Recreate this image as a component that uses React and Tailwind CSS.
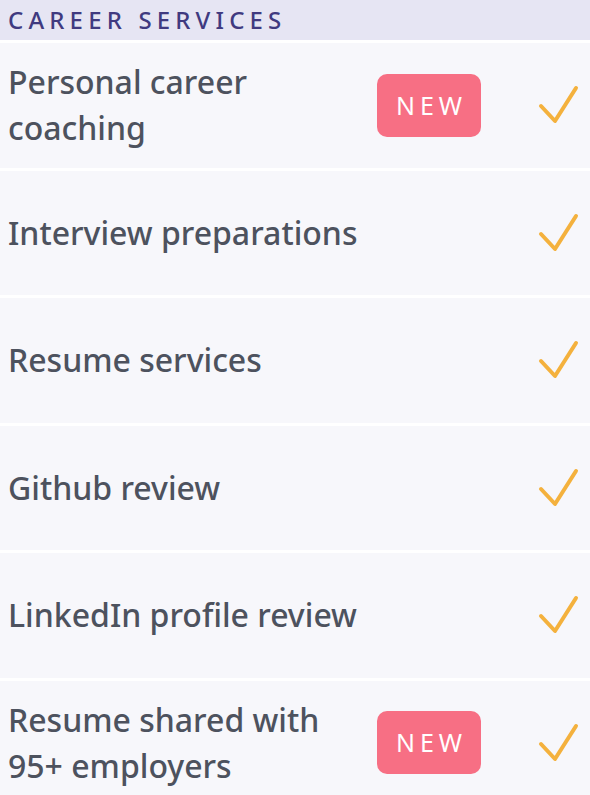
import React from "react";

const rows = [
  { label: ["Personal career", "coaching"], isNew: true },
  { label: ["Interview preparations"] },
  { label: ["Resume services"] },
  { label: ["Github review"] },
  { label: ["LinkedIn profile review"] },
  { label: ["Resume shared with", "95+ employers"], isNew: true },
];

function Check() {
  return (
    <svg width="46" height="46" viewBox="0 0 46 46" fill="none">
      <polyline
        points="5,24 19,39 40,6"
        stroke="#f4b13d"
        strokeWidth="4"
        strokeLinecap="round"
        strokeLinejoin="round"
      />
    </svg>
  );
}

export default function App() {
  return (
    <div
      className="w-[590px] h-[795px] overflow-hidden bg-white flex flex-col gap-[3px]"
      style={{ fontFamily: '"Noto Sans", "Open Sans", sans-serif' }}
    >
      <div className="h-[40px] shrink-0 bg-[#e6e5f3] flex items-center pl-[8px]">
        <span className="text-[24px] font-medium tracking-[0.215em] text-[#403a80] leading-none">
          CAREER SERVICES
        </span>
      </div>
      {rows.map((r, i) => (
        <div
          key={i}
          className="h-[124.5px] shrink-0 bg-[#f7f7fb] flex items-center pl-[8px] pr-[8px]"
        >
          <div className="flex-1 text-[32px] font-medium leading-[46px] text-[#4d525e]">
            {r.label.map((l, j) => (
              <div key={j}>{l}</div>
            ))}
          </div>
          {r.isNew && (
            <div className="w-[104px] h-[63px] rounded-[10px] bg-[#f76f84] flex items-center justify-center mr-[55px]">
              <span className="text-white text-[25px] tracking-[0.2em] pl-[0.2em] leading-none">
                NEW
              </span>
            </div>
          )}
          <div className="w-[46px] flex items-center justify-center">
            <Check />
          </div>
        </div>
      ))}
    </div>
  );
}
